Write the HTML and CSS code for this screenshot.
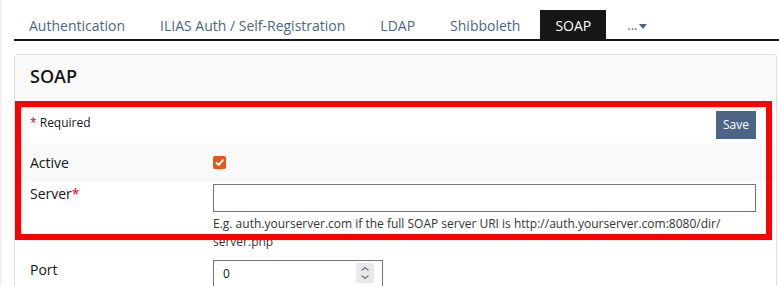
FILE: index.html
```html
<!DOCTYPE html>
<html lang="en">
<head>
    <meta charset="UTF-8">
    <meta name="viewport" content="width=device-width, initial-scale=1.0">
    <title>SOAP</title>
    <link rel="stylesheet" href="styles.css">
</head>
<body>
    <nav class="tabs">
        <a href="#" class="tab">Authentication</a>
        <a href="#" class="tab">ILIAS Auth / Self-Registration</a>
        <a href="#" class="tab">LDAP</a>
        <a href="#" class="tab">Shibboleth</a>
        <a href="#" class="tab active">SOAP</a>
        <a href="#" class="tab more">... <span class="caret"></span></a>
    </nav>

    <div class="panel">
        <div class="panel-head">
            <h2>SOAP</h2>
        </div>

        <form class="form" onsubmit="return false;">
            <div class="form-top">
                <span class="required"><span class="star">*</span> Required</span>
                <button class="save">Save</button>
            </div>

            <div class="row shaded">
                <label class="label">Active</label>
                <div class="field">
                    <span class="checkbox">
                        <svg width="13" height="13" viewBox="0 0 13 13"><path d="M3.4 6.8 L5.6 9 L9.8 4.3" fill="none" stroke="#fff" stroke-width="1.9" stroke-linecap="round" stroke-linejoin="round"/></svg>
                    </span>
                </div>
            </div>

            <div class="row">
                <label class="label" for="server">Server<span class="star">*</span></label>
                <div class="field">
                    <input type="text" id="server" class="input">
                    <div class="help">E.g. auth.yourserver.com if the full SOAP server URI is http://auth.yourserver.com:8080/dir/<wbr>server.php</div>
                </div>
            </div>

            <div class="row">
                <label class="label port" for="port">Port</label>
                <div class="field">
                    <div class="number">
                        <input type="text" id="port" class="input small" value="0">
                        <span class="spin">
                            <svg width="18" height="20" viewBox="0 0 18 20"><path d="M5.5 7.5 L9 4.5 L12.5 7.5 M5.5 12.5 L9 15.5 L12.5 12.5" fill="none" stroke="#6b6b75" stroke-width="1.1"/></svg>
                        </span>
                    </div>
                </div>
            </div>
        </form>

        <div class="highlight"></div>
    </div>
</body>
</html>
```

FILE: styles.css
```css
body {
    font-family: 'Open Sans', 'Liberation Sans', sans-serif;
    margin: 0;
    padding: 0;
    background-color: #fff;
    color: #161616;
    border-left: 2px solid #f2f2f2;
    overflow: hidden;
}

.tabs {
    display: flex;
    margin-left: 12px;
    padding-top: 10px;
    border-bottom: 2px solid #161616;
}

.tab {
    display: block;
    height: 29px;
    line-height: 31px;
    padding: 0 15px;
    margin-right: 5px;
    font-size: 14px;
    color: #4c6586;
    text-decoration: none;
}

.tab.active {
    background-color: #161616;
    color: #fff;
}

.tab.more {
    padding-left: 16px;
    font-size: 13px;
}

.caret {
    display: inline-block;
    width: 0;
    height: 0;
    border-left: 4px solid transparent;
    border-right: 4px solid transparent;
    border-top: 5px solid #4c6586;
    vertical-align: middle;
    margin-left: -2px;
}

.panel {
    position: relative;
    margin: 13px 2px 0 12px;
    border: 1px solid #dddddd;
    border-radius: 3px;
}

.panel-head {
    background-color: #f9f9f9;
    height: 46px;
    padding: 0 15px;
    display: flex;
    align-items: center;
}

.panel-head h2 {
    margin: 0 0 4px;
    font-size: 18px;
    font-weight: 600;
}

.form-top {
    display: flex;
    justify-content: space-between;
    align-items: center;
    height: 42px;
    padding: 0 20px 0 15px;
}

.required {
    font-size: 12px;
    margin-top: 0;
}

.star {
    color: #e0000e;
}

.save {
    font-family: inherit;
    font-size: 12px;
    color: #fff;
    background-color: #4c6586;
    border: none;
    height: 28px;
    padding: 0 7px;
    margin-top: 5px;
}

.row {
    display: flex;
    padding: 3px 20px 3px 15px;
}

.row.shaded {
    background-color: #f9f9f9;
    padding-top: 0;
    padding-bottom: 0;
    height: 38px;
    align-items: center;
}

.label {
    width: 183px;
    flex-shrink: 0;
    font-size: 14px;
}

.field {
    flex-grow: 1;
}

.checkbox {
    display: block;
    width: 13px;
    height: 13px;
    border-radius: 2px;
    background-color: #e2571e;
    margin-top: 0;
}

.checkbox svg {
    display: block;
}

.input {
    display: block;
    box-sizing: border-box;
    width: 100%;
    height: 28px;
    border: 1px solid #757575;
    font-family: inherit;
    font-size: 12px;
    padding: 0 9px;
    color: #161616;
}

.help {
    font-size: 12px;
    line-height: 18px;
    color: #333;
    margin-top: 3px;
    margin-bottom: 3px;
}

.number {
    position: relative;
    width: 170px;
}

.input.small {
    height: 27px;
}

.spin {
    position: absolute;
    right: 9px;
    top: 3px;
    width: 18px;
    height: 20px;
    background-color: #e9e9ed;
}

.spin svg {
    display: block;
}

.highlight {
    position: absolute;
    left: 0;
    top: 46px;
    width: 757px;
    height: 139px;
    box-sizing: border-box;
    border: 6px solid #ff0000;
    pointer-events: none;
}
```
